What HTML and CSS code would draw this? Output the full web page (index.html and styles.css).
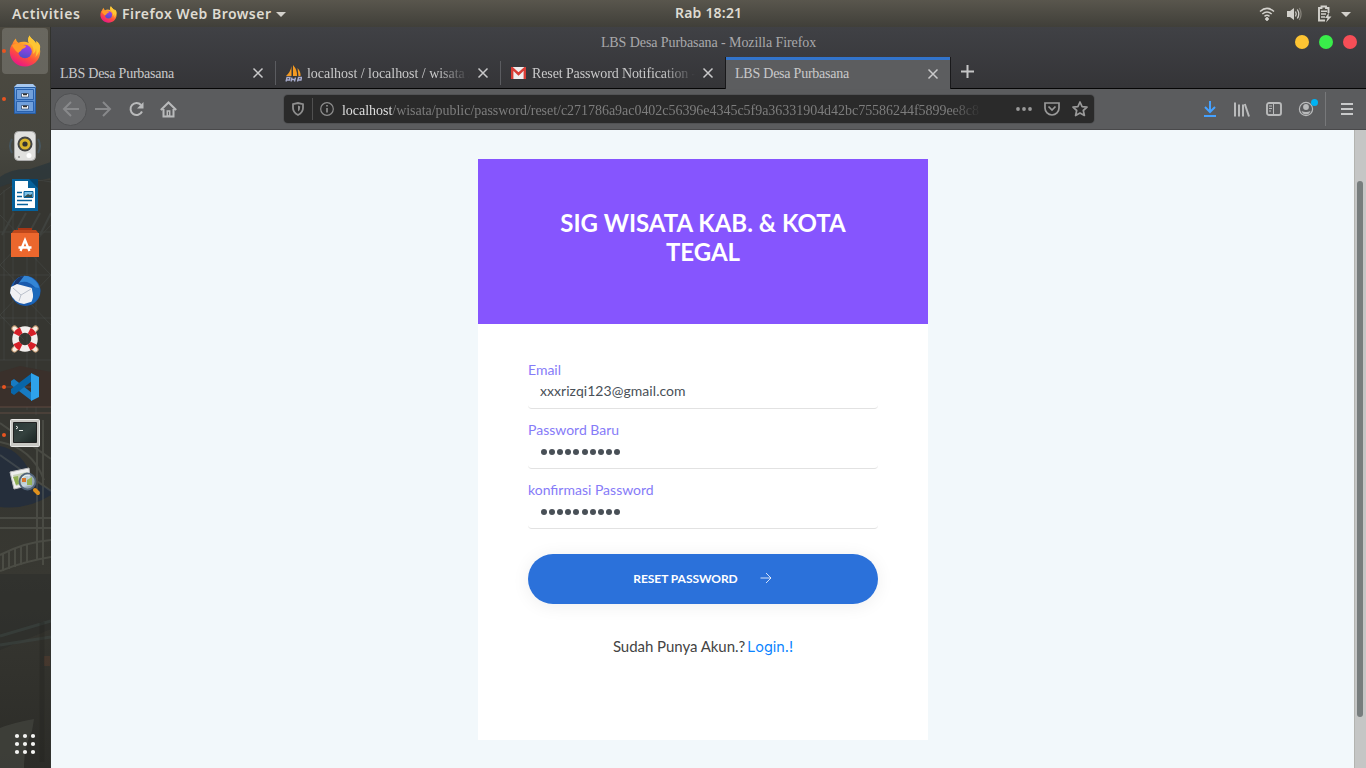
FILE: index.html
```html
<!DOCTYPE html>
<html lang="id">
<head>
<meta charset="utf-8">
<title>LBS Desa Purbasana</title>
<link rel="stylesheet" href="styles.css">
</head>
<body>
<svg class="defs" width="0" height="0">
  <defs>
    <linearGradient id="fx" x1=".8" y1="0" x2=".3" y2="1"><stop offset="0" stop-color="#fff44f"/><stop offset=".35" stop-color="#ffa52a"/><stop offset=".65" stop-color="#ff4f3c"/><stop offset="1" stop-color="#e8128c"/></linearGradient>
    <linearGradient id="fp" x1=".6" y1="0" x2=".4" y2="1"><stop offset="0" stop-color="#a93bea"/><stop offset="1" stop-color="#4b4fc9"/></linearGradient>
    <linearGradient id="blue" x1="0" y1="0" x2="0" y2="1"><stop offset="0" stop-color="#76a7e2"/><stop offset="1" stop-color="#3f77c4"/></linearGradient>
    <linearGradient id="term" x1="0" y1="0" x2="1" y2="1"><stop offset="0" stop-color="#2b3a38"/><stop offset=".5" stop-color="#34413e"/><stop offset="1" stop-color="#1a2422"/></linearGradient>
    <symbol id="firefox" viewBox="0 0 32 32">
      <path fill="url(#fx)" d="M20.500.5c-1.500 2.500-1.800 5-.6 7.500-3-1.500-7-2-10.500-.2C7.500 6.500 7 5 7 3.500 5.500 4.700 4.300 6.500 3.600 8.400 1.500 11 .6 14 .8 17.500 1.300 25.500 8 31.500 16 31.500c8.500 0 15.200-6.500 15.200-15 0-4.500-1.500-8-4-10.500.3 1 .4 2 .3 3C25.500 5 22 4 20.500.5z"/>
      <circle fill="url(#fp)" cx="16" cy="16.500" r="6.800"/>
      <path fill="#ff9a28" d="M3 10.500c2.500-2 6-2.500 9-.5 2 0 4.500.2 5 1 0 2-3.500 2.500-4.300 3.500-.7 2-2.700 2-3.200 3.500-2-1-4-3.500-6.500-7.500z"/>
      <path fill="#ffc634" d="M20.500.5c-1.500 2.500-1.800 5-.6 7.500 4 2 5.500 6 4 11 2-1.500 3-3.500 3-6 1 3 .7 6-.5 9 3-3 4.800-7 4.800-10 0-2.200-1.500-4.500-4-6 .3 1 .4 2 .3 3C25.500 5 22 4 20.500.5z"/>
    </symbol>
    <symbol id="close" viewBox="0 0 12 12"><path d="M1.500 1.500l9 9m0-9l-9 9" fill="none" stroke="currentColor" stroke-width="1.500"/></symbol>
  </defs>
</svg>

<header class="panel">
  <div class="panel-left">
    <span class="activities">Activities</span>
    <svg width="17" height="17"><use href="#firefox"/></svg>
    <span class="appname">Firefox Web Browser</span>
    <i class="caret"></i>
  </div>
  <span class="clock">Rab 18:21</span>
  <div class="panel-right">
    <svg width="16" height="16" viewBox="0 0 16 16" fill="none" stroke="#d3d1cc" stroke-width="1.500"><path d="M1 5.500Q8-.7 15 5.500M3.300 8Q8 4 12.700 8M5.500 10.300Q8 8.400 10.500 10.300"/><circle cx="8" cy="13" r="1.400" fill="#d3d1cc" stroke-width="1"/></svg>
    <svg width="16" height="16" viewBox="0 0 16 16" fill="none" stroke-width="1.300"><path fill="#d3d1cc" d="M1 5h3l4-3v12l-4-3H1z"/><path stroke="#d3d1cc" d="M9.500 5.500q1.500 2.500 0 5M11.300 3.500q3 4.500 0 9"/><path stroke="#85827a" d="M13.300 2q3.500 6 0 12"/></svg>
    <svg width="16" height="18" viewBox="0 0 16 18" fill="none" stroke="#d3d1cc" stroke-width="1.900"><path d="M12.500 8V3h-2.500V1.500h-4.500V3H3v12.500h6"/><path d="M5 6.200h6M5 9h5M5 12h4" stroke-width="1.500"/><path d="M13 7.500l-4 5.500h2.500L10 17.500l5.500-6h-3z" fill="#d3d1cc" stroke="none"/></svg>
    <i class="caret"></i>
  </div>
</header>

<div class="desktop">
  <nav class="dock">
    <svg class="wallpaper" width="51" height="741" viewBox="0 27 51 741" fill="none">
      <path fill="#2a363b" opacity=".75" d="M0 177Q12 168 30 169L51 162V178Q20 184 0 190z"/>
      <path fill="#363631" d="M0 187Q20 178 51 180V430H0z"/>
      <g stroke="#596161" opacity=".28"><path d="M0 195Q20 175 51 182M4 190v170M13 185v170M27 230v180M36 235v180M0 215l24 25-24 25 24 25-24 25 24 25M51 225l-24 25 24 25-24 25 24 25M0 232h51M0 275h51M0 318h51M0 360h51"/><path d="M2 235l12-22M14 235l12-22M28 235l12-22M40 235l11-22" stroke-width="2"/></g>
      <path fill="#3a302b" d="M0 372l20-6 31 6v35H0z"/><path stroke="#685047" stroke-width="2" opacity=".4" d="M0 407h51M0 413h51M0 387h35"/>
      <path fill="#252e3b" d="M0 446Q23 450 34 482L51 490V495Q28 510 0 507z"/>
      <g stroke="#777972" opacity=".3" stroke-width="2"><path d="M0 423L51 459M0 455L51 491M0 442Q32 448 44 480M37 420v140M43 420v145M0 518h51M0 528h51M0 555Q25 542 51 540M0 571Q25 561 51 557M3 553v18M9 551v18M15 549v18M21 547v18M27 545v18"/></g>
      <path fill="#292c2a" opacity=".5" d="M0 574h51v55L0 650z"/>
      <path stroke="#465251" opacity=".35" stroke-width="3" d="M0 636L51 621M0 645l51-8"/><path fill="#69432e" opacity=".35" d="M44 656h6v10h-6z"/>
      <path fill="#484943" opacity=".6" d="M0 728q12-5 34-9l-2 12q-8 15-8 37H0z"/><path stroke="#22221e" stroke-width="5" opacity=".3" d="M42 622v140"/>
    </svg>
    <a class="app active"><svg width="32" height="32"><use href="#firefox"/></svg></a>
    <a class="app running"><svg width="24" height="32" viewBox="0 0 24 32"><path fill="#a7c8ef" d="M4 1h16l3 3v4H1V4z"/><path fill="url(#blue)" stroke="#255da5" d="M1.500 4.500h21v26h-21z"/><path fill="#71a0dc" stroke="#2a62ae" d="M3.500 6.500h17v10h-17zm0 12h17v10h-17z"/><path fill="#fff" stroke="#263f62" stroke-width=".7" d="M8.500 10.500h7v3.500h-7zm0 12h7V26h-7z"/><path fill="#333" d="M10 10.500h4v1.700h-4zm0 12h4v1.700h-4z"/></svg></a>
    <a class="app lift"><svg width="32" height="32" viewBox="0 0 32 32"><path fill="none" stroke="#47647b" stroke-width="2" opacity=".5" d="M3 9q-4 7 0 14M29 9q4 7 0 14"/><rect x="5.500" y="1.500" width="21" height="29" rx="4" fill="#e1e1df" stroke="#aaa"/><circle cx="16" cy="14" r="7.500" fill="#444"/><circle cx="16" cy="14" r="5.500" fill="#d8b42c"/><circle cx="16" cy="14" r="2.600" fill="#333"/><circle cx="20" cy="25.500" r="2.500" fill="#fff"/><circle cx="10" cy="27" r="1" fill="#888"/></svg></a>
    <a class="app"><svg width="28" height="34" viewBox="0 0 28 34"><path fill="#05619b" d="M1 1h18l8 9v23H1z"/><path fill="#fff" d="M4 3h13v7h7v20H4z"/><path fill="#034570" d="M18 1l9 9V1z"/><path stroke="#05619b" stroke-width="1.700" d="M6 14.500h5M6 18.500h5M6 22.500h15M6 26.500h11"/><path fill="#7dc1e8" stroke="#05619b" d="M13 13.500h9v6h-9z"/><path fill="#354c4c" d="M13 19l4-3 2 1 2-1v3z"/></svg></a>
    <a class="app lift"><svg width="30" height="32" viewBox="0 0 30 32"><path fill="none" stroke="#a63514" stroke-width="2" d="M9 6V3h12v3"/><path fill="#bf481b" d="M4 4h22l3 4H1z"/><path fill="#ec672d" d="M1 7h28v24H1z"/><path stroke="#fff" stroke-width="2.300" fill="none" d="M10.500 25L15 14l4.500 11M8.500 21.500h13"/></svg></a>
    <a class="app"><svg width="32" height="32" viewBox="0 0 32 32"><circle cx="16.500" cy="16" r="15" fill="#195aad"/><path fill="#3385d5" d="M5 7Q13-3 23 3q10 7 7 17-3-10-12-13-6-1-10 2z"/><path fill="#18376f" d="M6 6q4-5 9-5l-6 8-5 3z"/><path fill="#f0f1f4" d="M2 12l6-3 15 4 2 13-10 3q-10-1-14-11z"/><path stroke="#bbc1cc" fill="none" d="M4 13l8 7 10-6m-10 6l-2 6"/><path fill="#1b69bb" d="M22 12q5 7-1 18 12-6 10-17z"/></svg></a>
    <a class="app"><svg width="32" height="32" viewBox="0 0 32 32"><g fill="none"><g stroke-linecap="round"><path stroke="#c99e76" stroke-width="6" d="M5.500 5.500l3 3M26.500 5.500l-3 3M5.500 26.500l3-3M26.500 26.500l-3-3"/><path stroke="#f8ecdf" stroke-width="4" d="M5.500 5.500l3 3M26.500 5.500l-3 3M5.500 26.500l3-3M26.500 26.500l-3-3"/></g><circle cx="16" cy="16" r="9.500" stroke="#f2eeec" stroke-width="6.500"/><circle cx="16" cy="16" r="9.500" stroke="#d71f28" stroke-width="6.500" stroke-dasharray="6.500 8.423" stroke-dashoffset="-4.200"/></g></svg></a>
    <a class="app running"><svg width="30" height="30" viewBox="0 0 30 30"><path fill="#177bc2" d="M1 9l3-2 18 14v8L1 13z"/><path fill="#0865a8" d="M1 21l3 2L22 9V1L1 17z"/><path fill="#2ea2eb" d="M21 1l8 4v20l-8 4z"/></svg></a>
    <a class="app running up"><svg width="30" height="28" viewBox="0 0 30 28"><rect x=".5" y=".5" width="29" height="27" rx="1" fill="#c8c8c3" stroke="#e8e8e6"/><path fill="url(#term)" stroke="#222" d="M3.500 3.500h23v20h-23z"/><path stroke="#e9eee9" fill="none" d="M6 7l2 1.500L6 10m3 1.500h4"/></svg></a>
    <a class="app up"><svg width="32" height="32" viewBox="0 0 32 32"><path fill="#eee" stroke="#bbb" d="M1 7l19-4 2 17-17 4z"/><path fill="#c7d1b8" d="M4 10l14-3 2 10-13 4z"/><path fill="#8fae52" d="M4 12l5-1 1 8-3 1z"/><circle cx="18.500" cy="16.500" r="8" fill="#b9cedb" fill-opacity=".75" stroke="#526479" stroke-width="1.800"/><path fill="#d8762d" d="M13 13h4v4h-4z"/><path fill="#97b455" d="M18 15l5-3v8h-5z"/><path stroke="#fff" opacity=".8" fill="none" d="M13 13q3-4 8-3"/><path stroke="#e0911d" stroke-width="4" stroke-linecap="round" d="M26 25l3 3"/></svg></a>
    <a class="allapps"><svg width="22" height="22" fill="#f4f4f2"><g id="row"><circle cx="3" cy="3" r="2.100"/><circle cx="11" cy="3" r="2.100"/><circle cx="19" cy="3" r="2.100"/></g><use href="#row" y="8"/><use href="#row" y="16"/></svg></a>
  </nav>

  <section class="window">
    <div class="titlebar"><span class="title">LBS Desa Purbasana - Mozilla Firefox</span><div class="lights"><i class="min"></i><i class="max"></i><i class="quit"></i></div></div>
    <div class="tabs">
      <div class="tab"><span class="name">LBS Desa Purbasana</span><svg width="12" height="12"><use href="#close"/></svg></div>
      <div class="tab"><svg class="fav" width="17" height="17" viewBox="0 0 17 17"><path fill="#f39a22" d="M6.500 1v10H1q4.500-4 5.500-10zM8 0q4.500 5 4 11H8zM12.500 3q3.500 4 3 8h-2z"/><path stroke="#aaaed0" stroke-width="1.300" fill="none" d="M1 16.500l1-4h3l-.5 2.500H2m4 1.500l1-4m0 2h3m.5-2l-1 4m3 0l1-4h3l-.5 2.500h-3"/></svg><span class="name fade pma">localhost / localhost / wisata /</span><svg width="12" height="12"><use href="#close"/></svg></div>
      <div class="tab"><svg class="fav" width="15" height="12" viewBox="0 0 15 12"><path fill="#eee" d="M0 0h15v12H0z"/><path fill="none" stroke="#d73d35" stroke-width="2.400" d="M1.200 12V1.200L7.500 7l6.300-5.800V12"/></svg><span class="name fade mail">Reset Password Notification -</span><svg width="12" height="12"><use href="#close"/></svg></div>
      <div class="tab current"><span class="name">LBS Desa Purbasana</span><svg width="12" height="12"><use href="#close"/></svg></div>
      <svg class="plus" width="15" height="15" stroke="#c5c5c6" stroke-width="2"><path d="M7.500 1v13M1 7.500h13"/></svg>
    </div>
    <div class="toolbar">
      <div class="nav">
        <span class="back"><svg width="18" height="16" fill="none" stroke="#88898b" stroke-width="2"><path d="M17 8H2m7-7L2 8l7 7"/></svg></span>
        <svg width="18" height="16" fill="none" stroke="#88898b" stroke-width="2"><path d="M1 8h15M9 1l7 7-7 7"/></svg>
        <svg width="16" height="16" viewBox="0 0 16 16" fill="none" stroke="#b9babb" stroke-width="2"><path d="M14 10.500A6 6 0 1 1 13 4"/><path d="M15.500 1v6.500H9z" fill="#b9babb" stroke="none"/></svg>
        <svg width="17" height="17" viewBox="0 0 17 17" fill="none" stroke="#b9babb" stroke-width="2"><path d="M.8 9L8.500 1.500 16.200 9M3.500 8v7.500h10V8"/><path d="M7.300 10h2.400v5H7.300z" stroke-width="1.500"/></svg>
      </div>
      <div class="url">
        <svg width="12" height="14" viewBox="0 0 12 14" fill="none" stroke="#8e8e8e" stroke-width="1.800"><path d="M1 2.200L6 1l5 1.200V6q0 4.500-5 7Q1 10.500 1 6z"/><path d="M6 3.500v6q2.300-1.500 2.300-5z" fill="#8e8e8e" stroke="none"/></svg>
        <i class="sep"></i>
        <svg width="14" height="14" viewBox="0 0 14 14" fill="none" stroke="#8e8e8e"><circle cx="7" cy="7" r="6.300" stroke-width="1.200"/><path d="M7 6v4.500M7 3v1.600" stroke-width="1.700"/></svg>
        <span class="address"><b>localhost</b>/wisata/public/password/reset/c271786a9ac0402c56396e4345c5f9a36331904d42bc75586244f5899ee8c8</span>
        <svg class="dots" width="16" height="4" fill="#999"><circle cx="2" cy="2" r="1.900"/><circle cx="8" cy="2" r="1.900"/><circle cx="14" cy="2" r="1.900"/></svg>
        <svg width="16" height="14" viewBox="0 0 16 14" fill="none" stroke="#999" stroke-width="1.700"><path d="M1 1h14v5a7 7 0 0 1-14 0zM4.500 4.500L8 8l3.500-3.500"/></svg>
        <svg width="16" height="16" viewBox="0 0 16 16" fill="none" stroke="#999" stroke-width="1.700" stroke-linejoin="round"><path d="M8 1l2.100 4.600 4.900.5-3.700 3.400 1.100 5L8 12l-4.400 2.500 1.100-5L1 6.100l4.900-.5z"/></svg>
      </div>
      <div class="tools">
        <svg class="down" width="14" height="16" fill="none" stroke="#45a1ff" stroke-width="2"><path d="M7 0v11M2 6l5 5 5-5M1 15h12"/></svg>
        <svg width="16" height="15" fill="none" stroke="#b9babb" stroke-width="2"><path d="M1 .5v14M5 2.500v12M9 2.500v12M10.800 2l4.200 12.500"/></svg>
        <svg width="16" height="14" viewBox="0 0 16 14" fill="none" stroke="#b9babb"><rect x="1" y="1" width="14" height="12" rx="2" stroke-width="1.900"/><path d="M7.500 1v12M3 4h3M3 6.500h3M3 9h2"/></svg>
        <span class="account"><svg width="16" height="16" viewBox="0 0 16 16" fill="none"><circle cx="8" cy="8" r="6.600" stroke="#b9babb" stroke-width="1.200"/><circle cx="8" cy="6" r="2.900" fill="#b9babb"/><path d="M3.500 10q4.500 2 9 0-1.300 3.500-4.500 3.500T3.500 10z" fill="#b9babb"/></svg><i></i></span>
        <i class="bar"></i>
        <svg width="12" height="12" stroke="#c8c9ca" stroke-width="1.800"><path d="M0 1h12M0 6h12M0 11h12"/></svg>
      </div>
    </div>
    <div class="viewport">
      <main class="page">
        <div class="card">
          <h1>SIG WISATA KAB. &amp; KOTA<br><span>TEGAL</span></h1>
          <form>
            <label>Email</label><div class="input">xxxrizqi123@gmail.com</div>
            <label>Password Baru</label><div class="input dotsin"><i></i><i></i><i></i><i></i><i></i><i></i><i></i><i></i><i></i><i></i></div>
            <label>konfirmasi Password</label><div class="input dotsin"><i></i><i></i><i></i><i></i><i></i><i></i><i></i><i></i><i></i><i></i></div>
            <button type="button"><span>RESET PASSWORD</span><svg width="12" height="12" fill="none" stroke="#fff" stroke-width=".8"><path d="M.5 6h10.500M6 1l5 5-5 5"/></svg></button>
            <p><span>Sudah Punya Akun.?</span><a>Login.!</a></p>
          </form>
        </div>
      </main>
      <div class="scroll"><i></i></div>
    </div>
  </section>
</div>
</body>
</html>
```
FILE: styles.css
```css
* { box-sizing: border-box; }
body { margin: 0; width: 1366px; height: 768px; overflow: hidden; font-family: Lato, sans-serif; background: #33332f; }
svg { flex: none; display: block; }
.defs { position: absolute; }
.panel { height: 27px; display: grid; grid-template-columns: 1fr auto 1fr; align-items: center; background: linear-gradient(#59564d, #403f39); color: #dfdbd2; font: 600 14px/26px "Noto Sans", sans-serif; white-space: nowrap; }
.panel-left { display: flex; align-items: center; padding-left: 12px; }
.activities { width: 88px; letter-spacing: .6px; }
.appname { width: 149px; margin: 0 5px; letter-spacing: .48px; }
.clock { width: 118px; padding: 0 0 2px 51px; letter-spacing: .2px; }
.panel-right { display: flex; align-items: center; justify-content: flex-end; gap: 11px; padding-right: 15px; }
.panel-right svg:nth-child(3) { margin-left: 3px; margin-right: -2px; }
.caret { border: 5px solid transparent; border-top-color: #d3d1cc; border-bottom: 0; }
.desktop { display: flex; height: 741px; }
.dock { position: relative; width: 51px; flex: none; display: flex; flex-direction: column; background: linear-gradient(#4d4a41, #46463f 120px, #30312d 240px, #383832 550px, #2c2c28); border-right: 1px solid #32332f; }
.wallpaper { position: absolute; inset: 0; }
.app { position: relative; height: 48px; display: flex; align-items: center; justify-content: center; }
.app.active::after { content: ""; position: absolute; left: 2px; top: 1px; width: 46px; height: 46px; border-radius: 4px; background: rgba(255,255,255,.16); }
.app.active svg { position: relative; z-index: 1; }
.app.running::before, .app.active::before { content: ""; position: absolute; z-index: 2; left: 2px; top: 22px; width: 4px; height: 4px; border-radius: 50%; background: #e95420; }
.app.up { padding-bottom: 4px; }
.app.lift { padding-bottom: 2px; }
.allapps { position: relative; margin: auto auto 13px; }
.window { flex: 1; min-width: 0; display: flex; flex-direction: column; font-family: "Liberation Serif", serif; font-size: 14px; background: linear-gradient(#404145, #343437 62px); }
.titlebar { height: 29px; display: grid; grid-template-columns: 1fr auto 1fr; align-items: center; color: #a9a9ab; }
.title { grid-column: 2; white-space: nowrap; line-height: 29px; padding-top: 1px; letter-spacing: -.08px; }
.lights { display: flex; gap: 10px; justify-self: end; padding-right: 9px; }
.lights i { width: 14px; height: 14px; border-radius: 50%; background: #fdc433; }
.lights .max { background: #39ed4a; }
.lights .quit { background: #f64e57; }
.tabs { height: 33px; display: flex; border-bottom: 1px solid #050505; color: #c9c9ca; }
.tab { width: 225px; display: flex; align-items: center; padding: 2px 12px 0 9px; position: relative; }
.tab:not(.current)::after { content: ""; position: absolute; right: 0; top: 5px; width: 1px; height: 24px; background: #5b5c60; }
.tab:nth-child(3)::after { display: none; }
.name { flex: 1; overflow: hidden; white-space: nowrap; line-height: 24px; padding-top: 1px; letter-spacing: -.23px; }
.fade { -webkit-mask-image: linear-gradient(90deg, #000 80%, transparent); mask-image: linear-gradient(90deg, #000 80%, transparent); margin-right: 7px; }
.pma { letter-spacing: -.03px; }
.mail { letter-spacing: -.12px; }
.fav { margin-right: 5px; }
.tab:nth-child(3) .fav { margin-left: 1px; margin-right: 6px; }
.tab.current { width: 224px; background: #5c5d5f; border-top: 3px solid #3274cb; margin-top: 1px; height: 32px; padding: 0 11px 1px 9px; box-shadow: 1px 0 #19191b, -1px 0 #19191b; }
.tab.current .name { line-height: 22px; padding: 0; }
.plus { margin: 8px 0 0 10px; }
.toolbar { height: 41px; display: flex; align-items: center; background: #5b5c5e; border-bottom: 1px solid #49494b; }
.nav { display: flex; align-items: center; width: 233px; padding-left: 3px; }
.back { width: 33px; height: 33px; border: 1px solid #505153; border-radius: 50%; background: #68696b; display: flex; align-items: center; justify-content: center; margin-right: 7px; }
.nav > svg + svg { margin-left: 16px; }
.url { width: 810px; height: 28px; display: flex; align-items: center; padding: 0 6px 0 8px; background: #2a2a2a; border-radius: 4px; box-shadow: 0 0 0 1px #515254; }
.sep { height: 22px; width: 1px; background: #505050; margin: 0 7px 0 8px; }
.address { margin: 3px 34px 0 8px; width: 640px; overflow: hidden; white-space: nowrap; color: #7d7d7d; line-height: 22px; letter-spacing: -.03px; -webkit-mask-image: linear-gradient(90deg, #000 95%, transparent); mask-image: linear-gradient(90deg, #000 95%, transparent); }
.address b { color: #dedede; font-weight: 400; }
.url svg.dots, .url svg.dots + svg { margin-right: 12px; }
.tools { flex: 1; display: flex; align-items: center; justify-content: flex-end; padding-right: 13px; gap: 16px; }
.down { margin-right: 1px; }
.account { position: relative; }
.account i { position: absolute; right: -4px; top: -2px; width: 7px; height: 7px; border-radius: 50%; background: #00b3f4; }
.bar { width: 1px; height: 34px; background: #77787a; margin: 0 -1px 0 -5px; }
.viewport { flex: 1; display: flex; background: #f2f8fb; }
.page { flex: 1; padding: 29px 0 0 427px; font-family: Lato, sans-serif; }
.card { width: 450px; height: 581px; background: #fff; }
h1 { margin: 0; height: 165px; padding-top: 49px; background: #8655fe; color: #fff; text-align: center; font: 700 24px/29px Lato, sans-serif; }
form { padding: 36px 50px 0; }
label { display: block; font-size: 14px; line-height: 20px; height: 20px; color: #867bf8; }
.input { height: 29px; margin-bottom: 11px; padding: 0 12px; font-size: 14px; line-height: 22px; letter-spacing: .05px; color: #495057; border-bottom: 1px solid #e2e2e2; border-radius: 4px; }
.dotsin { display: flex; padding: 9px 13px; gap: 2.12px; }
.dotsin i { width: 6px; height: 6px; border-radius: 50%; background: #495057; }
button { margin-top: 25px; width: 350px; height: 50px; border: 0; border-radius: 25px; background: #2b71da; color: #fff; display: flex; align-items: center; justify-content: center; gap: 22px; padding: 0 7px 0 6px; font: 700 12px/18px Lato, sans-serif; letter-spacing: -.05px; box-shadow: 0 2px 18px rgba(0,0,0,.07); }
button svg { margin-top: -2px; }
p { margin: 31px 0 0; display: flex; justify-content: center; font-size: 15px; line-height: 22px; letter-spacing: -.04px; color: #444; }
p a { font-family: Inter, sans-serif; font-size: 14.5px; color: #0b84ff; margin: 1px 0 0 2px; }
.scroll { width: 12px; background: #c5c6c5; border-left: 1px solid #b3b4b0; padding: 51px 0 0 2px; }
.scroll i { display: block; width: 6px; height: 536px; border-radius: 3px; background: #777d7d; }
```
